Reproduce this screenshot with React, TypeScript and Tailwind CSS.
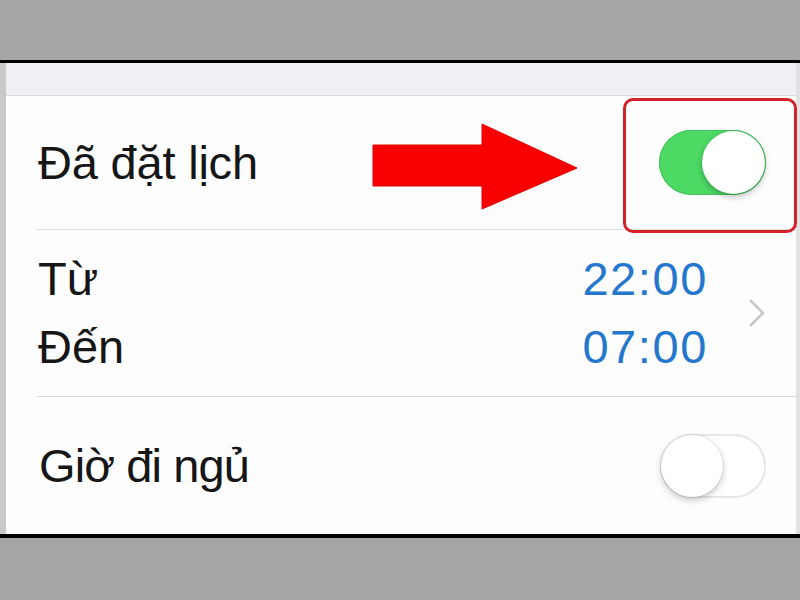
import React from "react";

function Toggle({ on }: { on: boolean }) {
  if (on) {
    return (
      <div className="relative h-[65px] w-[107px] rounded-full bg-[#4cd964] shadow-[inset_0_0_0_1px_#43c45a]">
        <div className="absolute right-[1px] top-[1px] h-[63px] w-[63px] rounded-full bg-white shadow-[0_3px_6px_rgba(0,0,0,0.25),0_0_0_1px_rgba(0,0,0,0.04)]" />
      </div>
    );
  }
  return (
    <div className="relative h-[64px] w-[106px] rounded-full border-2 border-[#e7e7e7] bg-white">
      <div className="absolute left-[-1px] top-[-1px] h-[62px] w-[62px] rounded-full bg-white shadow-[0_3px_7px_rgba(0,0,0,0.22),0_0_0_1px_rgba(0,0,0,0.06)]" />
    </div>
  );
}

function Chevron() {
  return (
    <svg width="16" height="28" viewBox="0 0 16 28" fill="none">
      <path d="M2 2 L14 14 L2 26" stroke="#c7c7cc" strokeWidth="2.6" strokeLinecap="round" strokeLinejoin="round" />
    </svg>
  );
}

export default function App() {
  return (
    <div
      className="relative flex h-[600px] w-[800px] flex-col overflow-hidden bg-[#a6a6a6] text-[#161616]"
      style={{ fontFamily: '"Liberation Sans", Arial, sans-serif' }}
    >
      <div className="h-[60px] shrink-0 bg-[#a6a6a6]" />
      <div className="h-[3px] shrink-0 bg-black" />

      <div className="flex h-[471px] shrink-0">
        <div className="w-[6px] bg-[#c9c9c9]" />
        <div className="flex flex-1 flex-col bg-[#fdfdfd]">
          {/* grouped table header */}
          <div className="h-[33px] shrink-0 border-b border-[#d9d9de] bg-[#efeff4]" />

          {/* scheduled */}
          <div className="flex h-[134px] shrink-0 flex-col">
            <div className="flex flex-1 items-center justify-between pl-[32px] pr-[30px]">
              <span className="text-[47px] leading-none tracking-[-0.2px]">Đã đặt lịch</span>
              <Toggle on />
            </div>
            <div className="ml-[31px] h-px bg-[#dcdcdc]" />
          </div>

          {/* from / to */}
          <div className="flex h-[167px] shrink-0 flex-col">
            <div className="flex flex-1 items-center pl-[32px] pr-[31px]">
              <div className="flex flex-1 flex-col text-[47px] leading-[68px]">
                <span>Từ</span>
                <span>Đến</span>
              </div>
              <div className="flex flex-col items-end text-[47px] leading-[68px] tracking-[1.6px] text-[#2477cc]">
                <span>22:00</span>
                <span>07:00</span>
              </div>
              <div className="ml-[41px] flex items-center">
                <Chevron />
              </div>
            </div>
            <div className="ml-[31px] h-px bg-[#dcdcdc]" />
          </div>

          {/* bedtime */}
          <div className="flex flex-1 items-center justify-between pl-[33px] pr-[30px]">
            <span className="text-[47px] leading-none tracking-[-0.9px]">Giờ đi ngủ</span>
            <Toggle on={false} />
          </div>
        </div>
        <div className="w-[4px] bg-[#e2e2e2]" />
      </div>

      <div className="h-[4px] shrink-0 bg-black" />
      <div className="flex-1 bg-[#a6a6a6]" />

      {/* annotation: pointer arrow */}
      <svg
        className="absolute left-0 top-0"
        width="800"
        height="600"
        viewBox="0 0 800 600"
        fill="none"
      >
        <polygon
          points="373,145 482,145 482,124 577,168 482,209 482,186 373,186"
          fill="#f90000"
          stroke="#e40000"
          strokeWidth="1"
        />
      </svg>

      {/* annotation: highlight box */}
      <div className="absolute left-[623px] top-[98px] h-[135px] w-[174px] rounded-[10px] border-[3px] border-[#d3222a]" />
    </div>
  );
}
